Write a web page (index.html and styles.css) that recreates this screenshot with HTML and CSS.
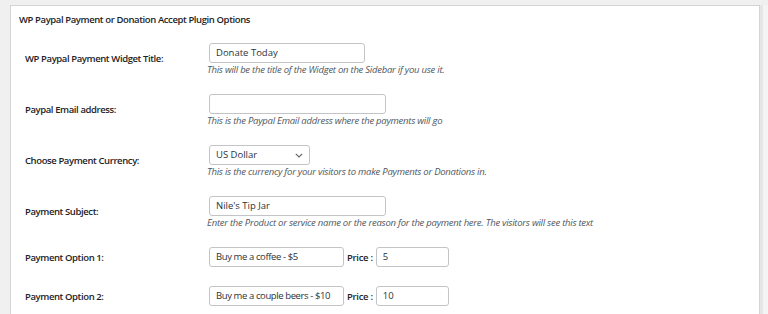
FILE: index.html
```html
<!DOCTYPE html>
<html>
<head>
<meta charset="utf-8">
<link rel="stylesheet" href="styles.css">
</head>
<body>
<div class="page">
  <div class="panel">
    <h2 class="panel-title">WP Paypal Payment or Donation Accept Plugin Options</h2>
    <div class="rows">
      <div class="row">
        <div class="label">WP Paypal Payment Widget Title:</div>
        <div class="field">
          <div class="input w-title">Donate Today</div>
          <div class="desc">This will be the title of the Widget on the Sidebar if you use it.</div>
        </div>
      </div>
      <div class="row">
        <div class="label">Paypal Email address:</div>
        <div class="field">
          <div class="input w-wide"></div>
          <div class="desc">This is the Paypal Email address where the payments will go</div>
        </div>
      </div>
      <div class="row">
        <div class="label">Choose Payment Currency:</div>
        <div class="field">
          <div class="input select">
            <span>US Dollar</span>
            <svg class="chev" width="8" height="5" viewBox="0 0 8 5"><path d="M0.8 0.8 L4 4 L7.2 0.8" fill="none" stroke="#646970" stroke-width="1.2"/></svg>
          </div>
          <div class="desc">This is the currency for your visitors to make Payments or Donations in.</div>
        </div>
      </div>
      <div class="row">
        <div class="label">Payment Subject:</div>
        <div class="field">
          <div class="input w-wide">Nile's Tip Jar</div>
          <div class="desc">Enter the Product or service name or the reason for the payment here. The visitors will see this text</div>
        </div>
      </div>
      <div class="row short">
        <div class="label">Payment Option 1:</div>
        <div class="field inline">
          <div class="input w-opt">Buy me a coffee - $5</div>
          <span class="price">Price :</span>
          <div class="input w-price">5</div>
        </div>
      </div>
      <div class="row short">
        <div class="label">Payment Option 2:</div>
        <div class="field inline">
          <div class="input w-opt">Buy me a couple beers - $10</div>
          <span class="price">Price :</span>
          <div class="input w-price">10</div>
        </div>
      </div>
    </div>
  </div>
  <div class="scroll"></div>
</div>
</body>
</html>
```
FILE: styles.css
```css
html, body {
  margin: 0;
  padding: 0;
  height: 100%;
  overflow: hidden;
}
body {
  background: #f0f0f1;
  font-family: "Open Sans", "Noto Sans", sans-serif;
  color: #1d2327;
}
.page {
  display: flex;
  padding: 5px 0 0 10px;
  height: 100%;
  box-sizing: border-box;
}
.panel {
  width: 750px;
  background: #fff;
  border: 1px solid #d4d4d4;
  border-bottom: none;
  box-sizing: border-box;
  padding: 0 0 0 8px;
}
.scroll {
  flex: 1;
  border-left: 3px solid #e6e6e6;
  background: #f4f4f4;
}
.panel-title {
  margin: 0;
  font-size: 9.5px;
  font-weight: 600;
  letter-spacing: -0.4px;
  line-height: 14px;
  padding: 7px 0 0;
  color: #1d2327;
}
.rows {
  padding-top: 7px;
}
.row {
  display: flex;
  align-items: center;
  padding: 9px 0 8px;
}
.row.short {
  padding: 9px 0 10px;
}
.label {
  width: 190px;
  padding-left: 6px;
  padding-bottom: 4px;
  box-sizing: border-box;
  font-size: 9.5px;
  font-weight: 600;
  letter-spacing: -0.4px;
  color: #1d2327;
}
.row.short .label {
  padding-bottom: 0;
}
.field {
  display: flex;
  flex-direction: column;
  align-items: flex-start;
}
.field.inline {
  flex-direction: row;
  align-items: center;
}
.input {
  height: 20px;
  box-sizing: border-box;
  border: 1px solid #c3c4c7;
  border-radius: 3px;
  font-size: 9.5px;
  line-height: 18px;
  padding: 0 6px;
  color: #2c3338;
  background: #fff;
  white-space: nowrap;
  overflow: hidden;
}
.w-title { width: 156px; }
.w-wide { width: 177px; }
.w-opt { width: 135px; letter-spacing: -0.4px; }
.w-price { width: 73px; }
.select {
  width: 101px;
  display: flex;
  justify-content: space-between;
  align-items: center;
  padding-right: 6px;
}
.chev { display: block; }
.desc {
  font-size: 9.5px;
  font-style: italic;
  letter-spacing: -0.25px;
  line-height: 14px;
  color: #50575e;
  margin-left: -2px;
}
.price {
  font-size: 9.5px;
  font-weight: 600;
  letter-spacing: -0.3px;
  padding: 0 3px 0 3px;
  color: #1d2327;
}
```
